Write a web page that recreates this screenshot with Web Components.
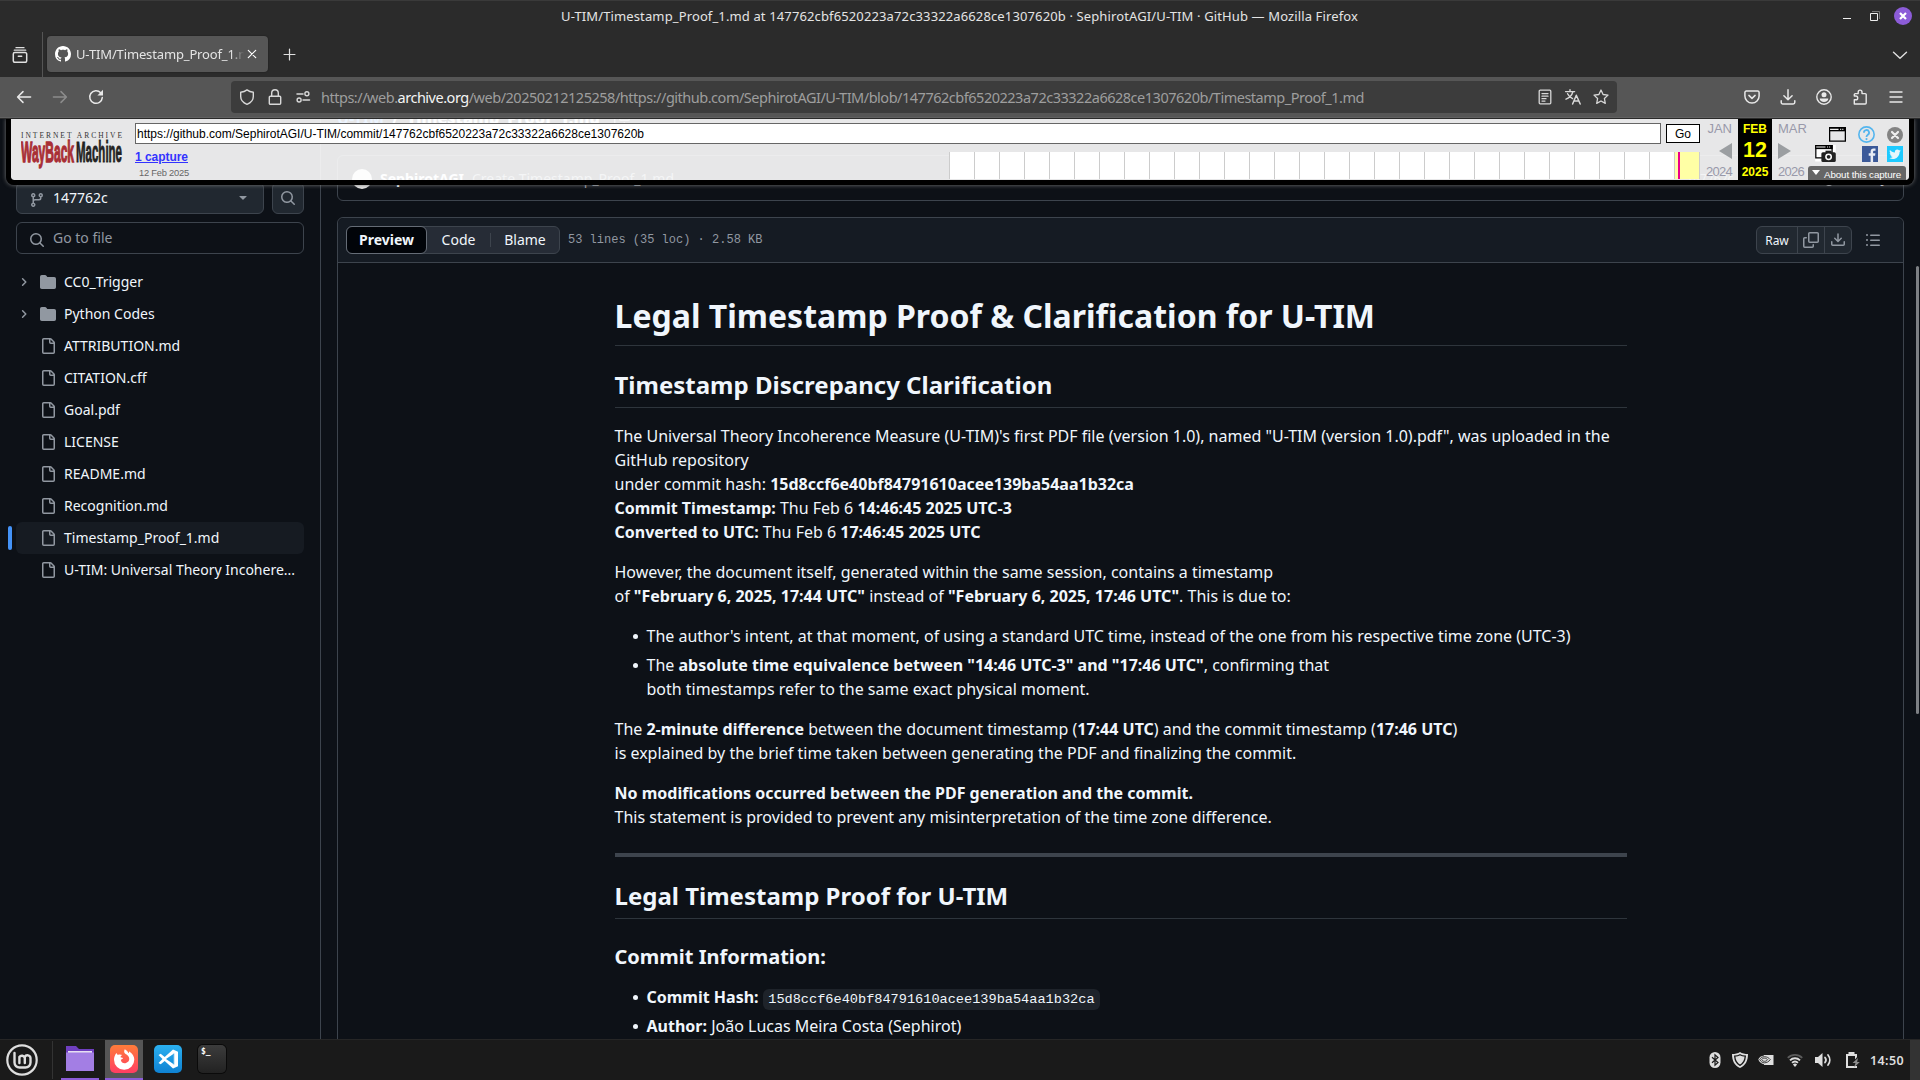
<!DOCTYPE html>
<html lang="en">
<head>
<meta charset="utf-8">
<title>U-TIM/Timestamp_Proof_1.md</title>
<style>
html,body{margin:0;height:100%;overflow:hidden;background:#0d1117}
body{font-family:"Noto Sans",sans-serif}
</style>
</head>
<body>
<desktop-screen></desktop-screen>
<script>
const define = (tag, css, html) => {
  const t = document.createElement('template');
  t.innerHTML = `<style>*{box-sizing:border-box}${css}</style>${html}`;
  customElements.define(tag, class extends HTMLElement {
    constructor() {
      super();
      this.attachShadow({ mode: 'open' }).appendChild(t.content.cloneNode(true));
    }
  });
};

/* ---------- icons ---------- */
const s = (d, w = 1.3) => `<path d="${d}" fill="none" stroke="currentColor" stroke-width="${w}" stroke-linecap="round" stroke-linejoin="round"/>`;
const f = d => `<path fill="currentColor" fill-rule="evenodd" d="${d}"/>`;
const ICONS = {
  branch: f('M9.5 3.25a2.25 2.25 0 1 1 3 2.122V6A2.5 2.5 0 0 1 10 8.5H6a1 1 0 0 0-1 1v1.128a2.251 2.251 0 1 1-1.5 0V5.372a2.25 2.25 0 1 1 1.5 0v1.836A2.493 2.493 0 0 1 6 7h4a1 1 0 0 0 1-1v-.628A2.25 2.25 0 0 1 9.5 3.25Zm-6 0a.75.75 0 1 0 1.5 0 .75.75 0 0 0-1.5 0Zm8.25-.75a.75.75 0 1 0 0 1.5.75.75 0 0 0 0-1.5ZM4.25 12a.75.75 0 1 0 0 1.5.75.75 0 0 0 0-1.5Z'),
  search: f('M10.68 11.74a6 6 0 0 1-7.922-8.982 6 6 0 0 1 8.982 7.922l3.04 3.04a.749.749 0 0 1-.326 1.275.749.749 0 0 1-.734-.215ZM11.5 7a4.499 4.499 0 1 0-8.997 0A4.499 4.499 0 0 0 11.5 7Z'),
  file: f('M2 1.75C2 .784 2.784 0 3.75 0h6.586c.464 0 .909.184 1.237.513l2.914 2.914c.329.328.513.773.513 1.237v9.586A1.75 1.75 0 0 1 13.25 16h-9.5A1.75 1.75 0 0 1 2 14.25Zm1.75-.25a.25.25 0 0 0-.25.25v12.5c0 .138.112.25.25.25h9.5a.25.25 0 0 0 .25-.25V6h-2.75A1.75 1.75 0 0 1 9 4.25V1.5Zm6.75.062V4.25c0 .138.112.25.25.25h2.688l-.011-.013-2.914-2.914-.013-.011Z'),
  folder: f('M1.75 1A1.75 1.75 0 0 0 0 2.75v10.5C0 14.216.784 15 1.75 15h12.5A1.75 1.75 0 0 0 16 13.25v-8.5A1.75 1.75 0 0 0 14.25 3H7.5a.25.25 0 0 1-.2-.1l-.9-1.2C6.07 1.26 5.55 1 5 1H1.75Z'),
  chevron: s('M6.6 4.8 9.8 8 6.6 11.2', 1.5),
  caret: f('M4.43 6.43 7.82 9.8a.25.25 0 0 0 .36 0l3.4-3.37A.25.25 0 0 0 11.4 6H4.6a.25.25 0 0 0-.17.43Z'),
  copy: f('M0 6.75C0 5.784.784 5 1.75 5h1.5a.75.75 0 0 1 0 1.5h-1.5a.25.25 0 0 0-.25.25v7.5c0 .138.112.25.25.25h7.5a.25.25 0 0 0 .25-.25v-1.5a.75.75 0 0 1 1.5 0v1.5A1.75 1.75 0 0 1 9.25 16h-7.5A1.75 1.75 0 0 1 0 14.25Z') + f('M5 1.75C5 .784 5.784 0 6.75 0h7.5C15.216 0 16 .784 16 1.75v7.5A1.75 1.75 0 0 1 14.25 11h-7.5A1.75 1.75 0 0 1 5 9.25Zm1.75-.25a.25.25 0 0 0-.25.25v7.5c0 .138.112.25.25.25h7.5a.25.25 0 0 0 .25-.25v-7.5a.25.25 0 0 0-.25-.25Z'),
  tray: f('M2.75 14A1.75 1.75 0 0 1 1 12.25v-2.5a.75.75 0 0 1 1.5 0v2.5c0 .138.112.25.25.25h10.5a.25.25 0 0 0 .25-.25v-2.5a.75.75 0 0 1 1.5 0v2.5A1.75 1.75 0 0 1 13.25 14Z') + f('M7.25 7.689V2a.75.75 0 0 1 1.5 0v5.689l1.97-1.969a.749.749 0 1 1 1.06 1.06l-3.25 3.25a.749.749 0 0 1-1.06 0L4.22 6.78a.749.749 0 1 1 1.06-1.06l1.97 1.969Z'),
  list: f('M5.75 2.5h8.5a.75.75 0 0 1 0 1.5h-8.5a.75.75 0 0 1 0-1.5Zm0 5h8.5a.75.75 0 0 1 0 1.5h-8.5a.75.75 0 0 1 0-1.5Zm0 5h8.5a.75.75 0 0 1 0 1.5h-8.5a.75.75 0 0 1 0-1.5ZM2 14a1 1 0 1 1 0-2 1 1 0 0 1 0 2Zm1-6a1 1 0 1 1-2 0 1 1 0 0 1 2 0ZM2 4a1 1 0 1 1 0-2 1 1 0 0 1 0 2Z'),
  github: f('M8 0c4.42 0 8 3.58 8 8a8.013 8.013 0 0 1-5.45 7.59c-.4.08-.55-.17-.55-.38 0-.27.01-1.13.01-2.2 0-.75-.25-1.23-.54-1.48 1.78-.2 3.65-.88 3.65-3.95 0-.88-.31-1.59-.82-2.15.08-.2.36-1.02-.08-2.12 0 0-.67-.22-2.2.82-.64-.18-1.32-.27-2-.27-.68 0-1.36.09-2 .27-1.53-1.03-2.2-.82-2.2-.82-.44 1.1-.16 1.92-.08 2.12-.51.56-.82 1.28-.82 2.15 0 3.06 1.86 3.75 3.64 3.95-.23.2-.44.55-.51 1.07-.46.21-1.61.55-2.33-.66-.15-.24-.6-.83-1.23-.82-.67.01-.27.38.01.53.34.19.73.9.82 1.13.16.45.68 1.31 2.69.94 0 .67.01 1.3.01 1.49 0 .21-.15.45-.55.38A7.995 7.995 0 0 1 0 8c0-4.42 3.58-8 8-8Z'),
  clock: s('M8 4.5V8h3M1.5 5A7 7 0 1 1 1 9', 1.5),
  recent: s('M4 .7h8M2.3 3.2h11.4', 1.3) + s('M2.8 5.5h10.4a1.5 1.5 0 0 1 1.5 1.5v6.8a1.5 1.5 0 0 1-1.5 1.5H2.800a1.500 1.500 0 0 1-1.500-1.500V7a1.500 1.500 0 0 1 1.500-1.500ZM6.300 9.300h3.400', 1.5),
  close: s('m4.3 4.300 7.400 7.400M11.700 4.300 4.300 11.700', 1.2),
  plus: s('M8 2.200v11.600M2.200 8h11.600', 1.3),
  down: s('M1.500 5.200 8 11.200l6.500-6', 1.4),
  back: s('M14.600 8H1.800M7 2.600 1.600 8 7 13.400', 1.5),
  forward: s('M1.400 8h12.800M9 2.600 14.400 8 9 13.400', 1.5),
  reload: s('M14.300 8.600A6.300 6.300 0 1 1 12.700 3.800L14 5', 1.5) + f('M15 .8v5.600H9.400Z'),
  shield: s('M8 .9C6.200 2.300 4.100 3 1.700 3.200v4.300C1.700 11 4 13.700 8 15.300c4-1.600 6.300-4.300 6.300-7.800V3.200C11.900 3 9.800 2.300 8 .9Z', 1.4),
  lock: s('M3.300 7.200h9.400a1 1 0 0 1 1 1v6a1 1 0 0 1-1 1H3.300a1 1 0 0 1-1-1v-6a1 1 0 0 1 1-1ZM4.700 7V4a3.300 3.300 0 0 1 6.600 0v3', 1.4),
  perms: s('M2 5h6M8 11h6.500', 1.5) + '<circle cx="11.900" cy="4.800" r="2" fill="none" stroke="currentColor" stroke-width="1.400"/><circle cx="4.100" cy="11" r="2" fill="none" stroke="currentColor" stroke-width="1.400"/>',
  reader: s('M3.200 1.200h9.600a1 1 0 0 1 1 1v11.600a1 1 0 0 1-1 1H3.200a1 1 0 0 1-1-1V2.200a1 1 0 0 1 1-1ZM5 4.600h6M5 7.200h6M5 9.700h4M5 12.100h3', 1.300),
  translate: s('M.6 2.600h9M5 .6v2M7.900 2.800C7 6 4 9 1 10.200M2.600 4.700C3.600 7 5.500 8.600 7.600 9.600', 1.400) + s('M7.600 15 11.300 6.200 15.200 15M8.900 12h5', 1.500),
  star: s('m8 1 2.100 4.500 4.900.6-3.600 3.400.9 4.900L8 12l-4.300 2.400.9-4.900L1 6.100l4.900-.6Z', 1.300),
  pocket: s('M2.300 2h11.400a1.400 1.400 0 0 1 1.400 1.400V7a7.100 7.100 0 0 1-14.200 0V3.400A1.400 1.400 0 0 1 2.300 2ZM4.900 6.400 8 9.400l3.100-3', 1.500),
  dl: s('M8 .8v9.700M3.900 6.700 8 10.700l4.100-4M1.200 11.800v1.500a1.600 1.600 0 0 0 1.600 1.600h10.400a1.600 1.600 0 0 0 1.600-1.600v-1.500', 1.500),
  account: '<circle cx="8" cy="8" r="7.200" fill="none" stroke="currentColor" stroke-width="1.400"/><circle cx="8" cy="5.800" r="2.500" fill="currentColor"/><path fill="currentColor" d="M3.700 9.500h8.600c0 2-1.900 3.500-4.300 3.500s-4.300-1.500-4.300-3.500Z"/>',
  ext: s('M2.300 15h10.900a1 1 0 0 0 1-1V5.600a1 1 0 0 0-1-1H10V3a1.900 1.900 0 0 0-3.800 0v1.600H3.300a1 1 0 0 0-1 1V7h1.500a1.700 1.700 0 0 1 0 3.800H2.300Z', 1.400),
  menu: s('M2 3h12M2 8h12M2 13h12', 1.400),
  window: '<path fill="none" stroke="#000" stroke-width="1.200" d="M.6 1.600h14.800v12.600H.6Z"/><path d="M0 1h16v4H0z"/><path stroke="#eee" d="M1 3.200h8M10.500 3.200h1M12.500 3.200h1" stroke-width="1.100"/>',
  shot: '<path fill="#fff" d="M0 0h20v16H0z"/><path fill="none" stroke="#000" stroke-width="1.200" d="M.6.6h15.800v12H.6Z"/><path d="M0 0h17v4H0z"/><path stroke="#fff" d="M1 2h9M11.500 2h1M13.500 2h1"/><rect x="6" y="7" width="14" height="9.500" rx="1.500" fill="#222"/><path fill="#222" d="M10 5.500h6V8h-6z"/><circle cx="13" cy="11.500" r="2.600" fill="none" stroke="#fff" stroke-width="1.500"/>',
  help: '<circle cx="8" cy="8" r="7.200" fill="none" stroke="#54b5ee" stroke-width="1.500"/><path fill="none" stroke="#54b5ee" stroke-width="1.700" d="M5.600 6.400A2.400 2.400 0 1 1 9 8.400Q8 9 8 10.300"/><circle cx="8" cy="12.300" r="1" fill="#54b5ee"/>',
  dismiss: '<circle cx="8" cy="8" r="8" fill="#838383"/><path stroke="#eee" stroke-width="2.200" stroke-linecap="round" d="m5 5 6 6M11 5l-6 6"/>',
  fb: '<path fill="#3b5998" d="M0 0h16v16H0z"/><path fill="#e8ecf4" d="M8.600 16V9.700H6.700V7.300h1.900V5.500c0-2 1.200-3 3-3h1.900v2.300h-1.300c-.8 0-1.100.4-1.100 1.100v1.400h2.300l-.3 2.400h-2V16Z"/>',
  tw: '<path fill="#1dcaff" d="M0 0h16v16H0z"/><path fill="#e6f6fb" d="M13.800 4.600c-.4.200-.9.300-1.300.4.500-.3.800-.7 1-1.300-.5.300-1 .5-1.500.6a2.400 2.400 0 0 0-4.100 2.200C5.900 6.400 4.100 5.400 3 4c-.7 1.100-.3 2.500.7 3.200-.4 0-.7-.1-1-.3 0 1.200.8 2.100 1.900 2.400-.3.100-.7.100-1.100 0 .3 1 1.200 1.600 2.200 1.700-1 .8-2.200 1.100-3.500 1 4.700 2.900 10.400-.4 10.400-6 .5-.4.900-.8 1.200-1.400Z"/>',
  bt: '<rect x="2.500" y="0" width="11" height="16" rx="5.500" fill="#dedede"/><path fill="none" stroke="#1a1a1a" stroke-width="1.200" d="m5 5.300 6 5.200-3 2.700V2.800l3 2.700-6 5.200"/>',
  safe: '<path fill="#dedede" d="M8 0C6 1.400 3 2.100 0 2.100c0 7 2.500 11.600 8 13.900 5.500-2.300 8-6.900 8-13.900C13 2.100 10 1.400 8 0Z"/><path fill="none" stroke="#1a1a1a" stroke-width="1.300" d="M8 2.700C6.600 3.500 4.700 4 2.700 4.100 3 8.600 4.700 11.600 8 13.300c3.300-1.700 5-4.700 5.300-9.200C11.300 4 9.400 3.500 8 2.700Z"/>',
  nv: '<path fill="#dedede" d="M6 3h9.500v10H6z"/><path fill="#dedede" d="M6 3.600C3.400 3.800 1 5.600.3 7.500 1.500 10.300 3.500 12 6 12.300Z"/><path fill="none" stroke="#1a1a1a" stroke-width=".8" d="M1.700 7.500C2.800 5.700 4.300 4.700 6.400 4.700c2.500 0 4.500 1.200 5.900 2.900-1.600 2.100-3.500 3.200-5.800 3.200-2 0-3.500-1-4.800-3.300Z"/><path fill="none" stroke="#1a1a1a" stroke-width=".8" d="M3.600 7.600C4.300 6.600 5.300 6.200 6.400 6.200c1.400 0 2.500.6 3.200 1.500-.8 1.100-1.800 1.600-3.100 1.600-1.200 0-2.100-.5-2.900-1.700Z"/>',
  wifi: '<g fill="none" stroke-width="1.900"><path stroke="#5c5c5c" d="M.8 5.900a10.200 10.200 0 0 1 14.400 0"/><path stroke="#dedede" d="M3 8.300a7 7 0 0 1 10 0"/><path stroke="#dedede" d="M5.100 10.800a4 4 0 0 1 5.800 0"/></g><path fill="#dedede" d="M8 15 5.900 12.500a3 3 0 0 1 4.200 0Z"/>',
  vol: '<path fill="#dedede" d="M0 5h3l4.500-4v14L3 11H0Z"/><path fill="none" stroke="#dedede" stroke-width="1.800" stroke-linecap="round" d="M10 5.500a4 4 0 0 1 0 5M13 3a8 8 0 0 1 0 10"/>',
  batt: '<path fill="none" stroke="#dedede" stroke-width="2" d="M3 3h9v12H3Z"/><path fill="#dedede" d="M4.500 0h6v3h-6z"/><path fill="#1a1a1a" d="m13.500 4.500-6 7H10V14h6V7Z"/><path fill="#8d8d8d" d="M14 6 8.500 11h3L10 15.500 15.800 10h-2.700Z"/>',
  mint: '<circle cx="16" cy="16" r="14.700" fill="none" stroke="#dedede" stroke-width="2.200"/><path fill="none" stroke="#dedede" stroke-width="2.400" stroke-linecap="round" d="M8.500 9v9.500a5 5 0 0 0 5 5h6a5 5 0 0 0 5-5V14a3 3 0 0 0-5.700-1v6M18.800 14a3 3 0 0 0-5.400-1v6"/>',
  files: '<path fill="#6f3fbf" d="M0 1h10l3 3h15v6H0Z"/><path fill="#e6dff2" d="M2 6h24v3H2z"/><path fill="#a37ee4" d="M0 7.500h28V26H0Z"/>',
  fox: '<defs><linearGradient id="g" x2="0" y2="1"><stop stop-color="#ff7d3a"/><stop offset="1" stop-color="#ff3d62"/></linearGradient></defs><rect width="28" height="28" rx="5" fill="url(#g)"/><path fill="#fff" fill-rule="evenodd" d="M14.800 4.300c2.300 1.300 3.200 2.700 3.700 4 .7-.4.600-1.300.4-2 3.500 2 5.400 5.200 5.400 8.300A10.100 10.100 0 0 1 4 14.800c0-2.500.9-4.900 2.400-6.800l1.400 1.900c1.500-.6 3-.5 4.400.2-1 .6-1.500 1.300-1.700 2.200l2.600.7c-.4 1-1.500 1.400-2.300 1.800.3 3 3 4 5.200 3.300 2.700-.8 4-3.400 2.800-6-.7-1.500-1.800-2.200-3.200-3-1.700-1.200-1.800-3-.8-4.800Z"/>',
  code: '<defs><linearGradient id="g" x2="0" y2="1"><stop stop-color="#2bb0f0"/><stop offset="1" stop-color="#0f82d2"/></linearGradient></defs><rect width="28" height="28" rx="5" fill="url(#g)"/><path fill="#fff" d="m19 4.500 5 2.200v14.600l-5 2.200V9.200L12 14l7 4.800v4.700L10.700 16l-4 3.200L4.500 18l4-4-4-4 2.200-1.200 4 3.200Z"/><path fill="#2299e0" d="M19.200 9v10l1 .8V8.200Z"/>',
};
customElements.define('x-icon', class extends HTMLElement {
  connectedCallback() {
    if (this.shadowRoot) return;
    const w = this.getAttribute('w') || 16, h = this.getAttribute('h') || w;
    const vb = this.getAttribute('box') || '0 0 16 16';
    this.attachShadow({ mode: 'open' }).innerHTML =
      `<style>:host{display:block;flex:none;width:${w}px;height:${h}px}svg{display:block;overflow:visible}</style>
       <svg width="${w}" height="${h}" viewBox="${vb}">${ICONS[this.getAttribute('name')]}</svg>`;
  }
});

/* Tracks its text so that it fills a given width. */
customElements.define('fit-text', class extends HTMLElement {
  connectedCallback() {
    if (this.shadowRoot) return;
    this.attachShadow({ mode: 'open' }).innerHTML =
      '<style>:host{display:block;white-space:pre;flex:none}span{display:inline-block;text-decoration:inherit}</style><span><slot></slot></span>';
    const span = this.shadowRoot.querySelector('span');
    const target = +this.getAttribute('w');
    this.style.width = target + 'px';
    const fit = () => {
      span.style.letterSpacing = '0';
      const w = span.getBoundingClientRect().width;
      if (w) span.style.letterSpacing = (target - w) / this.textContent.length + 'px';
    };
    fit();
    requestAnimationFrame(fit);
  }
});

/* ---------- browser chrome ---------- */
define('title-bar', `
:host{display:flex;height:32px;background:#2b2b2b;border-top:1px solid #3a3a3a;color:#e4e4e4;align-items:center;font-size:13px}
.t{margin:-2px auto 0 561px}
.min{width:8px;height:1px;background:#eee;margin:5px 19px 0 0}
.c{display:flex;align-items:center;padding-right:8px;margin-top:-1px}`,
`<fit-text class="t" w="797">U-TIM/Timestamp_Proof_1.md at 147762cbf6520223a72c33322a6628ce1307620b · SephirotAGI/U-TIM · GitHub — Mozilla Firefox</fit-text>
<div class="c"><div class="min"></div>
<svg width="10" height="10" style="margin-right:14px"><path d="M.5 2.500h7v7h-7z" fill="none" stroke="#eee"/><path d="M2 .5h7.500V8" fill="none" stroke="#777"/></svg>
<svg width="18" height="18"><circle cx="9" cy="9" r="9" fill="#8c5cd8"/><path d="m6 6 6 6M12 6l-6 6" stroke="#fff" stroke-width="2.200"/></svg></div>`);

define('tab-strip', `
:host{display:flex;height:45px;background:#2b2b2b;color:#e0e0e0;align-items:center;padding:0 12px}
.sep{width:1px;height:45px;background:#555;margin:0 4px 0 14px}
.tab{display:flex;align-items:center;width:221px;height:36px;background:#565656;border-radius:4px;padding:0 8px;margin:-1px 14px 0 0;font-size:13px;box-shadow:0 0 2px #0006;color:#fff}
.n{width:169px;overflow:hidden;margin:-1px 0 0 5px;color:#e4e4e4;-webkit-mask:linear-gradient(90deg,#000 155px,transparent 168px);mask:linear-gradient(90deg,#000 155px,transparent 168px)}
.d{margin-left:auto}`,
`<x-icon name="recent" w="16"></x-icon><div class="sep"></div>
<div class="tab"><x-icon name="github"></x-icon><div class="n"><fit-text w="182">U-TIM/Timestamp_Proof_1.md</fit-text></div><x-icon name="close" w="16"></x-icon></div>
<x-icon name="plus" w="15"></x-icon><x-icon class="d" name="down" w="16"></x-icon>`);

define('nav-bar', `
:host{display:flex;height:42px;background:#565656;align-items:center;border-bottom:1px solid #2a2a2a;color:#e8e8e8;padding:0 16px 1px;box-shadow:inset 0 -1px #616161}
.url{display:flex;align-items:center;width:1386px;height:32px;background:#3c3c3c;border-radius:4px;margin-left:127px;padding:0 8px;color:#d8d8d8}
.u{font-size:14.500px;color:#9e9e9e;margin:-1px auto 0 10px}
.u b{font-weight:400;color:#f4f4f4}
.g{display:flex;gap:20px;margin-left:auto}`,
`<x-icon name="back"></x-icon><x-icon name="forward" style="margin-left:20px;color:#8c8c8c"></x-icon><x-icon name="reload" style="margin-left:20px"></x-icon>
<div class="url"><x-icon name="shield"></x-icon><x-icon name="lock" style="margin-left:12px"></x-icon><x-icon name="perms" style="margin-left:12px"></x-icon>
<fit-text class="u" w="1043">https://web.<b>archive.org</b>/web/20250212125258/https://github.com/SephirotAGI/U-TIM/blob/147762cbf6520223a72c33322a6628ce1307620b/Timestamp_Proof_1.md</fit-text>
<x-icon name="reader" style="margin-right:12px"></x-icon><x-icon name="translate" style="margin-right:12px"></x-icon><x-icon name="star"></x-icon></div>
<div class="g"><x-icon name="pocket"></x-icon><x-icon name="dl"></x-icon><x-icon name="account"></x-icon><x-icon name="ext"></x-icon><x-icon name="menu"></x-icon></div>`);

/* ---------- archive toolbar ---------- */
define('capture-graph', `
:host{display:flex;width:751px;height:27px}
i{flex:none;width:25px;border-left:1px solid #ccc;background:#fff}
i:last-child{background:#ffffa5;border-right:1px solid #ccc;width:26px;padding-left:3px}
i:last-child::before{content:"";display:block;width:2px;height:27px;background:#ec008c}`,
'<i></i>'.repeat(30));

define('wayback-bar', `
:host{display:flex;height:66px;border:solid #000;border-width:0 5px 5px;border-radius:0 0 8px 8px;background:rgba(255,255,255,.9);box-shadow:0 0 4px #777;background-clip:padding-box;font-family:"Liberation Sans",sans-serif;color:#000}
.logo{width:124px;padding:11px 0 0 10px}
.mid{width:1565px;padding-top:4px}
.row{display:flex;gap:5px}
.in{width:1526px;height:21px;background:#fff;border:1px solid #666;padding:1px 2px 0 1px;line-height:19px;font-size:12px}
.go{width:34px;height:19px;margin-top:1px;border:1px solid #000;background:#fff;text-align:center;font-size:12px;line-height:18px}
.low{display:flex;justify-content:space-between;margin-top:8px}
a{color:#33f;font-weight:bold;font-size:12px;line-height:14px;display:block;margin-top:-2px}
a fit-text{text-decoration:underline}
small{display:block;color:#666;font-size:9.300px;line-height:12px;margin:3px 0 0 4px}
.m{display:flex;flex-direction:column;width:38px;padding:3px 6px 0 0;align-items:flex-end;color:#99a;font-size:13px;line-height:14px;height:60px;justify-content:space-between}
.m.r{align-items:flex-start;padding:3px 0 0 6px}
.cur{width:34px;background:#000;color:#ff0;font-weight:bold;text-align:center;font-size:12px;line-height:14px;padding-top:3px;height:61px}
.cur b{display:block;font-size:21.500px;line-height:29px}
.ic{display:flex;flex-direction:column;width:99px;align-items:flex-end;padding:7px 6px 0 0}
.ir{display:flex;align-items:center}
.ab{display:flex;align-items:center;margin:4px -3px 0 0;width:98px;height:17px;background:#666;color:#fff;font-size:9.800px;border-radius:3px 3px 0 0;padding:2px 0 0 4px}
.tri{border:4px solid transparent;border-top:5px solid #fff;border-bottom:0;margin:-3px 4px 0 0}`,
`<div class="logo"><svg width="102" height="42"><text x="0" y="7.500" font-family="Liberation Serif" font-size="7.500" textLength="101" fill="#333">INTERNET ARCHIVE</text>
<g transform="translate(0 32) scale(1 1.700)" font-family="Liberation Sans Narrow,Liberation Sans" font-weight="bold" font-size="17"><text textLength="53" lengthAdjust="spacingAndGlyphs" fill="#a92e35" stroke="#a92e35" stroke-width=".8">WayBack</text><text x="55" textLength="46" lengthAdjust="spacingAndGlyphs" fill="#222" stroke="#222" stroke-width=".5">Machine</text></g></svg></div>
<div class="mid"><div class="row"><div class="in"><fit-text w="507">https://github.com/SephirotAGI/U-TIM/commit/147762cbf6520223a72c33322a6628ce1307620b</fit-text></div><div class="go">Go</div></div>
<div class="low"><div><a><fit-text w="53">1 capture</fit-text></a><small><fit-text w="50">12 Feb 2025</fit-text></small></div><capture-graph></capture-graph></div></div>
<div class="m"><span>JAN</span><svg width="13" height="16"><path d="M13 0v16L0 8Z" fill="#9b9ea1"/></svg><fit-text w="26">2024</fit-text></div>
<div class="cur">FEB<b>12</b>2025</div>
<div class="m r"><span>MAR</span><svg width="13" height="16"><path d="M0 0v16l13-8Z" fill="#9b9ea1"/></svg><fit-text w="26">2026</fit-text></div>
<div class="ic"><div class="ir"><x-icon name="window" w="17"></x-icon><x-icon name="help" w="17" style="margin:0 12px"></x-icon><x-icon name="dismiss"></x-icon></div>
<div class="ir" style="margin-top:2px"><x-icon name="shot" w="21" h="17" box="0 0 20 16.500"></x-icon><x-icon name="fb" style="margin:0 9px 0 26px"></x-icon><x-icon name="tw"></x-icon></div>
<div class="ab"><div class="tri"></div><fit-text w="77">About this capture</fit-text></div></div>`);

/* ---------- repository page ---------- */
define('tree-row', `
:host{display:flex;align-items:center;height:32px;color:#f0f6fc;font-size:14px;border-radius:6px;white-space:nowrap}
:host([current]){background:#161b22}
.ind{display:none;width:4px;height:24px;margin:0 4px 0 -8px;border-radius:6px;background:#4493f8}
:host([current]) .ind{display:block}
.tw{width:16px;height:16px;flex:none}
.tx{margin-top:-2px}
.ico{display:flex;width:32px;padding-left:8px;flex:none;color:#9198a1}`,
`<div class="ind"></div><div class="tw"><slot name="tw"></slot></div><div class="ico"><slot name="ico"></slot></div><div class="tx"><slot></slot></div>`);

const file = (n, cur = '') => `<tree-row ${cur}><x-icon slot="ico" name="file"></x-icon>${n}</tree-row>`;
const dir = n => `<tree-row><x-icon slot="tw" name="chevron" style="color:#9198a1"></x-icon><x-icon slot="ico" name="folder"></x-icon>${n}</tree-row>`;
define('file-tree', `
:host{display:block;width:321px;border-right:1px solid #3d444d;padding:63px 16px 0;font-size:14px;color:#f0f6fc}
.r{display:flex;gap:8px}
.b{display:flex;align-items:center;height:32px;border:1px solid #3d444d;border-radius:6px;background:#212830;width:248px;padding:0 12px;color:#9198a1}
.b.s{width:32px;padding:0 7px}
.b span{color:#f0f6fc;margin:-1px auto 0 8px}
.q{background:none;width:auto;margin:8px 0 12px}
.q span{color:#9198a1;margin-top:-2px}
x-icon[name=branch],.q x-icon{margin-top:3px}`,
`<div class="r"><div class="b"><x-icon name="branch"></x-icon><span>147762c</span><x-icon name="caret"></x-icon></div><div class="b s"><x-icon name="search"></x-icon></div></div>
<div class="b q"><x-icon name="search"></x-icon><span>Go to file</span></div>
${dir('CC0_Trigger')}${dir('Python Codes')}${['ATTRIBUTION.md', 'CITATION.cff', 'Goal.pdf', 'LICENSE', 'README.md', 'Recognition.md'].map(n => file(n)).join('')}${file('Timestamp_Proof_1.md', 'current')}${file('U-TIM: Universal Theory Incohere...')}`);

define('commit-card', `
:host{display:block;color:#f0f6fc;font-size:14px}
.bc{display:flex;align-items:center;gap:8px;height:24px;margin-top:-13px;font-size:16px;font-weight:700}
.bc span{color:#4493f8}
.box{display:flex;align-items:center;height:46px;margin-top:25px;border:1px solid #3d444d;border-radius:6px;padding:0 16px 0 14px}
.av{width:20px;height:20px;border-radius:50%;background:#e8e8e8;margin:2px 8px 0 0}
.box b{font-weight:700;margin-right:8px}
.m{color:#9198a1}
.e{display:flex;align-items:center;gap:6px;font-size:12px}`,
`<div class="bc"><span>U-TIM</span>/<b>Timestamp_Proof_1.md</b><x-icon name="copy" style="margin-left:6px;color:#9198a1"></x-icon></div>
<div class="box"><div class="av"></div><b>SephirotAGI</b><span class="m">Create Timestamp_Proof_1.md</span>
<div class="e" style="margin-left:auto"><span class="m" style="margin-right:82px">147762c</span><x-icon name="clock"></x-icon><b style="margin:0">History</b></div></div>`);

define('blob-header', `
:host{display:flex;align-items:center;height:45px;background:#151b23;border-bottom:1px solid #3d444d;border-radius:6px 6px 0 0;padding:0 22px 0 8px;color:#f0f6fc;font-size:14px}
.seg{display:flex;width:214px;height:28px;border:1px solid #3d444d;border-radius:6px;background:#262c36;align-items:center}
.p{width:81px;height:28px;margin-left:-1px;border:1px solid #656c76;border-radius:6px;background:#010409;font-weight:700;display:flex;align-items:center;justify-content:center;padding-bottom:2px}
.c{width:63px;text-align:center;margin-top:-2px}
.l{width:1px;height:14px;background:#3d444d}
.bl{flex:1;text-align:center;margin-top:-2px}
.info{font:12px "Liberation Mono",monospace;color:#9198a1;margin:-1px auto 0 8px}
.g{display:flex;height:28px;border:1px solid #3d444d;border-radius:6px;background:#212830;font-size:12px;margin-right:13px;color:#9198a1}
.g>*{display:flex;align-items:center;justify-content:center;width:27px;border-left:1px solid #3d444d}
.g>:first-child{width:40px;border:0;color:#f0f6fc}`,
`<div class="seg"><div class="p">Preview</div><div class="c">Code</div><div class="l"></div><div class="bl">Blame</div></div>
<div class="info">53 lines (35 loc) · 2.58 KB</div>
<div class="g"><div>Raw</div><div><x-icon name="copy"></x-icon></div><div><x-icon name="tray"></x-icon></div></div>
<x-icon name="list" style="color:#9198a1"></x-icon>`);

define('markdown-body', `
:host{display:block;width:1012px;margin:32px auto 0;font-size:16px;line-height:24px;color:#f0f6fc;white-space:nowrap}
h1,h2,h3{font-weight:700;line-height:1.25;margin:24px 0 16px}
h1,h2{border-bottom:1px solid #3d444db3;padding-bottom:.3em}
h1{font-size:32px;margin-top:0;padding:1px 0 8.600px}h2{font-size:24px}h3{font-size:20px;margin-top:25px}
p,ul{margin:0 0 16px}ul{padding-left:32px;list-style:none}li+li{margin-top:5px}
li::before{content:"";display:inline-block;width:5px;height:5px;border-radius:50%;background:currentColor;margin:0 8.500px 0 -13.500px;vertical-align:2.500px}
b{font-weight:700}
hr{height:4px;border:0;background:#3d444d;margin:24px 0}
code{font:13.600px "Liberation Mono",monospace;line-height:1;background:#656c7633;border-radius:6px;padding:3.200px 5.440px}`,
`<h1>Legal Timestamp Proof &amp; Clarification for U-TIM</h1>
<h2>Timestamp Discrepancy Clarification</h2>
<p>The Universal Theory Incoherence Measure (U-TIM)'s first PDF file (version 1.0), named "U-TIM (version 1.0).pdf", was uploaded in the<br>GitHub repository<br>under commit hash: <b>15d8ccf6e40bf84791610acee139ba54aa1b32ca</b><br><b>Commit Timestamp:</b> Thu Feb 6 <b>14:46:45 2025 UTC-3</b><br><b>Converted to UTC:</b> Thu Feb 6 <b>17:46:45 2025 UTC</b></p>
<p>However, the document itself, generated within the same session, contains a timestamp<br>of <b>"February 6, 2025, 17:44 UTC"</b> instead of <b>"February 6, 2025, 17:46 UTC"</b>. This is due to:</p>
<ul><li>The author's intent, at that moment, of using a standard UTC time, instead of the one from his respective time zone (UTC-3)</li>
<li>The <b>absolute time equivalence between "14:46 UTC-3" and "17:46 UTC"</b>, confirming that<br>both timestamps refer to the same exact physical moment.</li></ul>
<p>The <b>2-minute difference</b> between the document timestamp (<b>17:44 UTC</b>) and the commit timestamp (<b>17:46 UTC</b>)<br>is explained by the brief time taken between generating the PDF and finalizing the commit.</p>
<p><b>No modifications occurred between the PDF generation and the commit.</b><br>This statement is provided to prevent any misinterpretation of the time zone difference.</p>
<hr>
<h2>Legal Timestamp Proof for U-TIM</h2>
<h3>Commit Information:</h3>
<ul><li><b>Commit Hash:</b> <code>15d8ccf6e40bf84791610acee139ba54aa1b32ca</code></li>
<li><b>Author:</b> João Lucas Meira Costa (Sephirot)</li></ul>`);

define('repo-page', `
:host{display:flex;position:relative;height:920px;overflow:hidden;background:#0d1117}
main{flex:1;padding:0 16px}
.blob{border:1px solid #3d444d;border-radius:6px;margin-top:16px;height:900px}
wayback-bar{position:absolute;left:6px;top:0;width:1908px}
.sb{position:absolute;right:1px;top:147px;width:3px;height:448px;border-radius:2px;background:#7d8084}`,
`<file-tree></file-tree><main><commit-card></commit-card><div class="blob"><blob-header></blob-header><markdown-body></markdown-body></div></main>
<wayback-bar></wayback-bar><div class="sb"></div>`);

/* ---------- desktop panel ---------- */
define('task-bar', `
:host{display:flex;height:41px;background:#1a1a1a;border-top:1px solid #262626;padding-left:6px;color:#dedede}
.l{width:1px;background:#333;margin:1px 8px 1px 14px}
.a{width:38px;height:40px;display:flex;justify-content:center;padding-top:5px;margin-right:6px}
.u{border-bottom:2px solid #8c5cd8}
.on{background:#555}
.t{width:28px;height:28px;border-radius:5px;background:linear-gradient(#3c3c3c,#222);box-shadow:0 0 0 1px #0a0a0a;font:bold 8px/9px "DejaVu Sans Mono",monospace;padding:2px 3px;color:#fff}
.tray{display:flex;align-items:center;margin-left:auto}
.clk{font-weight:600;font-size:12.500px;margin:1px 6px 0 10px}
.e{width:10px;background:#333}`,
`<x-icon name="mint" w="32" box="0 0 32 32" style="margin-top:4px"></x-icon><div class="l"></div>
<div class="a u"><x-icon name="files" w="28" box="0 0 28 28"></x-icon></div>
<div class="a u on"><x-icon name="fox" w="28" box="0 0 28 28"></x-icon></div>
<div class="a"><x-icon name="code" w="28" box="0 0 28 28"></x-icon></div>
<div class="a"><div class="t">$_</div></div>
<div class="tray"><x-icon name="bt"></x-icon><x-icon name="safe" style="margin-left:9px"></x-icon><x-icon name="nv" style="margin-left:10px"></x-icon><x-icon name="wifi" style="margin-left:13px"></x-icon><x-icon name="vol" style="margin-left:12px"></x-icon><x-icon name="batt" style="margin-left:13px"></x-icon>
<fit-text class="clk" w="34">14:50</fit-text></div><div class="e"></div>`);

define('desktop-screen', `
:host{display:flex;flex-direction:column;width:1920px;height:1080px;overflow:hidden;font-family:"Noto Sans",sans-serif}
:host>*{flex:none}`,
`<title-bar></title-bar><tab-strip></tab-strip><nav-bar></nav-bar><repo-page></repo-page><task-bar></task-bar>`);
</script>
</body>
</html>
